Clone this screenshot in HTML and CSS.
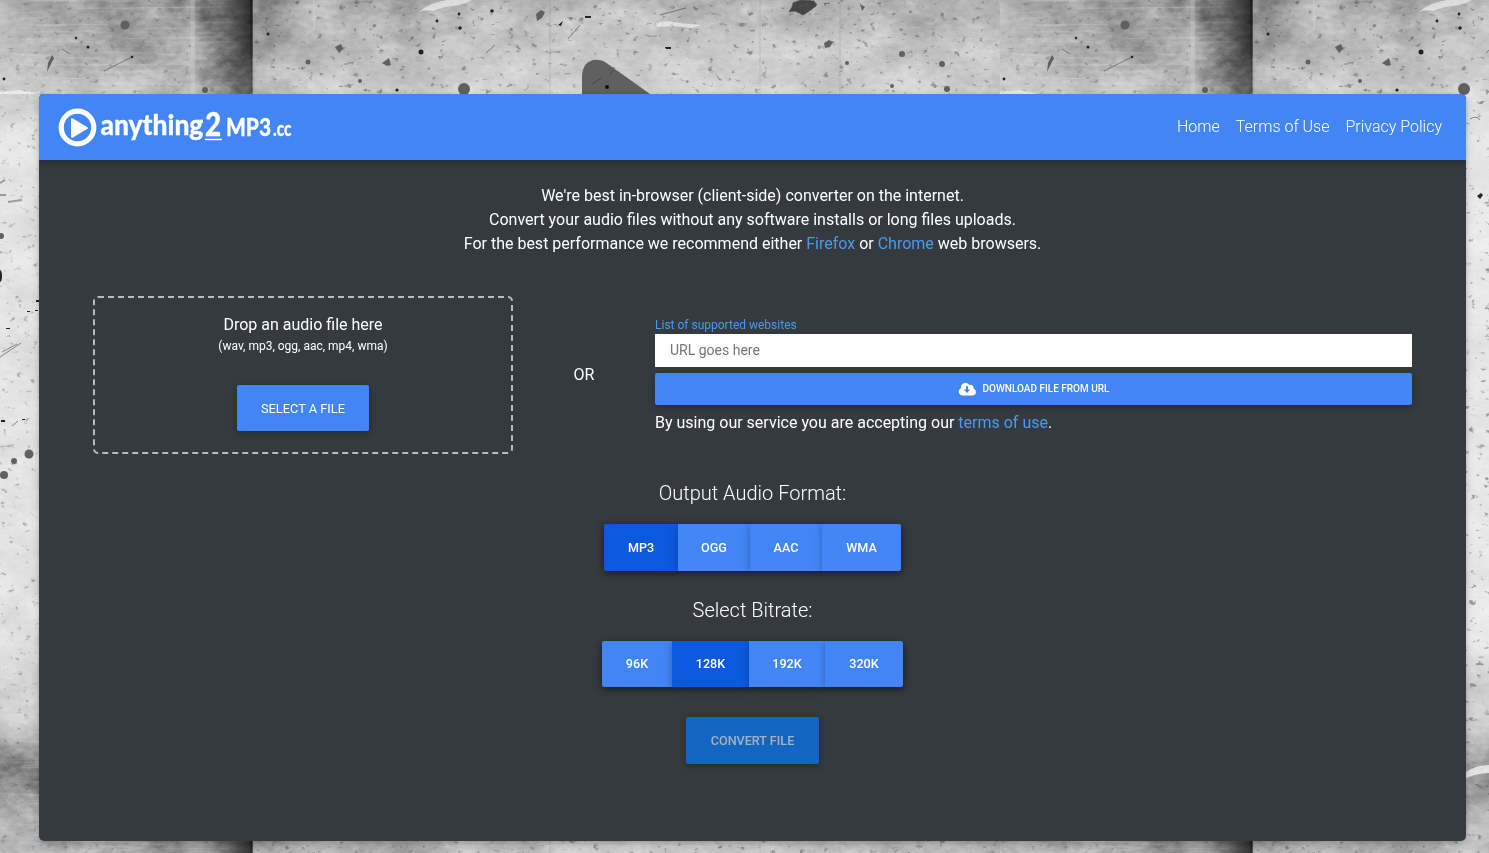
FILE: index.html
```html
<!DOCTYPE html>
<html lang="en">
<head>
<meta charset="utf-8">
<title>anything2MP3.cc</title>
<link rel="stylesheet" href="styles.css">
</head>
<body>
<svg class="wall" width="1489" height="853" viewBox="0 0 1489 853" aria-hidden="true">
  <defs>
    <linearGradient id="panel" x1="0" x2="1000" y1="0" y2="0" gradientUnits="userSpaceOnUse">
      <stop offset="0" stop-color="#bcbcbc"/><stop offset=".1" stop-color="#a8a8a8"/>
      <stop offset=".18" stop-color="#9c9c9c"/><stop offset=".19" stop-color="#acacac"/>
      <stop offset=".205" stop-color="#828282"/><stop offset=".228" stop-color="#585858"/>
      <stop offset=".25" stop-color="#2a2a2a"/><stop offset=".252" stop-color="#141414"/>
      <stop offset=".2535" stop-color="#a0a0a0"/><stop offset=".27" stop-color="#a4a4a4"/>
      <stop offset=".33" stop-color="#c0c0c0"/><stop offset=".4" stop-color="#acacac"/>
      <stop offset=".47" stop-color="#c4c4c4"/><stop offset=".75" stop-color="#c4c4c4"/><stop offset="1" stop-color="#bcbcbc"/>
    </linearGradient>
    <linearGradient id="light" x1="0" x2="0" y1="0" y2="1">
      <stop offset="0" stop-color="#000" stop-opacity=".08"/><stop offset=".05" stop-color="#fff" stop-opacity=".05"/>
      <stop offset=".1" stop-color="#fff" stop-opacity=".25"/><stop offset=".16" stop-color="#fff" stop-opacity=".62"/>
      <stop offset=".75" stop-color="#fff" stop-opacity=".6"/><stop offset=".84" stop-color="#fff" stop-opacity=".2"/>
      <stop offset=".9" stop-color="#000" stop-opacity=".3"/><stop offset=".95" stop-color="#000" stop-opacity=".12"/>
      <stop offset=".97" stop-color="#000" stop-opacity=".02"/>
      <stop offset="1" stop-color="#fff" stop-opacity=".05"/>
    </linearGradient>
    <linearGradient id="fade" x1="0" x2="1" y1="0" y2="0">
      <stop offset="0" stop-color="#000"/><stop offset=".15" stop-color="#fff"/><stop offset=".75" stop-color="#fff"/><stop offset="1" stop-color="#000"/>
    </linearGradient>
    <mask id="edges"><rect width="250" height="853" fill="url(#fade)"/></mask>
    <filter id="grain" x="0" y="0" width="100%" height="100%" color-interpolation-filters="sRGB">
      <feTurbulence type="fractalNoise" baseFrequency=".12 .2" numOctaves="4" seed="8"/>
      <feColorMatrix values=".6 .6 0 0 -.1  .6 .6 0 0 -.1  .6 .6 0 0 -.1  0 0 0 0 1"/>
    </filter>
    <filter id="cloud" x="0" y="0" width="100%" height="100%" color-interpolation-filters="sRGB">
      <feTurbulence type="fractalNoise" baseFrequency=".02 .03" numOctaves="3" seed="21"/>
      <feColorMatrix values="1 0 0 0 0  1 0 0 0 0  1 0 0 0 0  0 0 0 0 1"/>
    </filter>
    <filter id="streak" x="0" y="0" width="100%" height="100%" color-interpolation-filters="sRGB">
      <feTurbulence type="fractalNoise" baseFrequency=".012 .3" numOctaves="3" seed="5"/>
      <feColorMatrix values="0 0 0 0 1  0 0 0 0 1  0 0 0 0 1  3 0 0 0 -1.65"/>
    </filter>
    <filter id="pits" x="0" y="0" width="100%" height="100%" color-interpolation-filters="sRGB">
      <feTurbulence type="fractalNoise" baseFrequency=".13 .18" numOctaves="4" seed="14"/>
      <feColorMatrix values="0 0 0 0 .3  0 0 0 0 .3  0 0 0 0 .3  6 0 0 0 -4"/>
    </filter>
    <filter id="soft"><feGaussianBlur stdDeviation=".6"/></filter>
    <g id="tile">
      <rect width="1000" height="853" fill="url(#panel)"/>
      <rect width="1000" height="853" fill="url(#light)"/>
      <g class="blend">
        <rect width="1000" height="853" filter="url(#grain)" opacity=".45"/>
        <rect width="1000" height="853" filter="url(#cloud)" opacity=".45"/>
      </g>
      <g mask="url(#edges)">
        <rect width="250" height="100" filter="url(#streak)" opacity=".28"/>
        <rect y="720" width="250" height="133" filter="url(#streak)" opacity=".35"/>
      </g>
      <rect x="254" width="746" height="853" filter="url(#pits)" opacity=".5"/>
      <rect width="250" height="853" filter="url(#pits)" opacity=".35"/>
      <g filter="url(#soft)">
        <path d="M418 12q16-11 29-12h25q-8 5-20 6t-18 5q-7-2-16 1zM655 24q12-5 24-1l23 2-10 3q-18-3-35-1zM0 92l19-2 20 4H0z" fill="#fff" opacity=".55"/>
        <path d="M192 0v94M194 0v94M314 0v30" stroke="#ddd" opacity=".5"/>
        <g fill="#606060">
          <circle cx="125" cy="25" r="4.5"/><circle cx="464" cy="89" r="6"/>
          <path d="M382 63l7-5 2 7-4 1zM335 47l6-3 2 5-4 4zM48 63l4-8 2 3-7 14zM536 14l5-4 4 2-3 6-5 3z"/>
          <circle cx="308" cy="62" r="2.5"/><circle cx="205" cy="90" r="3"/><circle cx="360" cy="81" r="2"/>
          <circle cx="29" cy="454" r="4.5"/><circle cx="14" cy="461" r="3"/><circle cx="4" cy="475" r="4"/>
          <circle cx="1" cy="236" r="3"/><ellipse cx="0" cy="276" rx="2" ry="6" fill="#222"/>
          <path d="M824 43l5-3 4 2-3 5-5 1zM860 4l5 3-3 4z"/>
          <circle cx="902" cy="54" r="3"/><circle cx="942" cy="64" r="3"/><circle cx="847" cy="63" r="2"/><circle cx="892" cy="86" r="2"/><circle cx="947" cy="89" r="3"/>
        </g>
        <g fill="#222">
          <circle cx="421" cy="52" r="2.5"/><circle cx="460" cy="28" r="1.8"/><circle cx="459" cy="14" r="1.4"/><circle cx="492" cy="11" r="1.8"/>
          <circle cx="397" cy="90" r="1.6"/><circle cx="268" cy="34" r="1.5"/><circle cx="437" cy="21" r="1.4"/><circle cx="88" cy="47" r="1.5"/><circle cx="132" cy="57" r="1.3"/><circle cx="76" cy="38" r="1.2"/><circle cx="4" cy="79" r="1.4"/>
          <path d="M558 25l5-4-2 5zM585 16h6v2h-6zM665 47h6v2h-5zM605 86l3-2v4h-3z"/>
          <path d="M477 196l4-3 2 2-3 4z"/>
          <path d="M36 300h3v2h-3zM27 311h3v1h-3zM35 310h3v1h-3zM6 328h4v1H6zM1 420h4v2H1zM22 419h3v1h-3z"/>
        </g>
        <path d="M793 3l8-3 13 1 3 4-6 5-8 5-8-4-6 1 3-5zM824 4l5-1M798 7l12-4" fill="#222" stroke="#333" stroke-dasharray="3 1" opacity=".75"/>
        <path d="M104 71l28-14M62 49l8 5M568 39l12-14M660 15l26-7M0 357l21-14M2 352l15-8M12 426l6-5M486 53l9-8M470 119q7-4 10 1" fill="none" stroke="#555" opacity=".65"/>
        <path d="M0 183l5-3M0 195h6M8 202l14-2" stroke="#666" stroke-width="2" opacity=".6"/>
        <path d="M466 772q10-7 23-7v8q-10 0-23 5z" fill="#fff" opacity=".7"/>
      </g>
      <g class="seams"><path d="M254 0v853M550 0v853M760 0v853M840 0v853"/></g>
    </g>
  </defs>
  <use href="#tile"/>
  <use href="#tile" x="1000"/>
  <path d="M582 94V77C582 63 592 56 605 62L650 94Z" fill="#606060"/>
  <path d="M592 84l10-6M609 75l5-5" stroke="#484848"/><circle cx="607" cy="87" r="2" fill="#111"/>
</svg>

<main class="card">
  <header class="navbar">
    <a class="brand" aria-label="anything2MP3.cc">
      <svg width="240" height="46" viewBox="0 0 240 46">
        <circle cx="22.500" cy="23.500" r="16.300" fill="none" stroke="#fff" stroke-width="5.200"/>
        <path d="M17 15.200v17.600L32 24z" fill="#fff" stroke="#fff" stroke-width="2" stroke-linejoin="round"/>
        <g class="logo-text">
          <text transform="translate(45.500 31) scale(.85 1)" font-size="28.500" textLength="121" lengthAdjust="spacingAndGlyphs">anything</text>
          <text transform="translate(150 31.500) scale(.9 1)" font-size="32" textLength="18" lengthAdjust="spacingAndGlyphs">2</text>
          <text transform="translate(171 32) scale(.9 1)" font-size="25" textLength="50" lengthAdjust="spacingAndGlyphs">MP3</text>
          <text transform="translate(218 32) scale(.8 1)" font-size="20" textLength="23" lengthAdjust="spacingAndGlyphs">.cc</text>
        </g>
        <path d="M150 35.500h17" stroke="#fff" stroke-width="1.500"/>
      </svg>
    </a>
    <nav class="menu"><a>Home</a><a>Terms of Use</a><a>Privacy Policy</a></nav>
  </header>
  <p class="intro">We're best in-browser (client-side) converter on the internet.<br>Convert your audio files without any software installs or long files uploads.<br>For the best performance we recommend either <a>Firefox</a> or <a>Chrome</a> web browsers.</p>
  <section class="sources">
    <div class="drop">
      <span>Drop an audio file here</span>
      <small>(wav, mp3, ogg, aac, mp4, wma)</small>
      <button class="btn select">Select a file</button>
    </div>
    <div class="or">OR</div>
    <div class="remote">
      <a class="supported">List of supported websites</a>
      <input class="url" type="text" placeholder="URL goes here">
      <button class="btn download">
        <svg width="18" height="14" viewBox="0 0 18 14"><path d="M4.500 13.500A4 4 0 0 1 3 5.900 4.500 4.500 0 0 1 11.300 3a3 3 0 0 1 4.200 3.500 3.600 3.600 0 0 1-1 7z" fill="#fff"/><path d="M8 4.300h2v3.200h2.200L9 10.900 5.800 7.500H8z" fill="#4285f4"/></svg>
        Download file from URL
      </button>
      <p class="terms">By using our service you are accepting our <a>terms of use</a>.</p>
    </div>
  </section>
  <h2 class="title">Output Audio Format:</h2>
  <div class="group formats"><button class="btn active">MP3</button><button class="btn">OGG</button><button class="btn">AAC</button><button class="btn">WMA</button></div>
  <h2 class="title">Select Bitrate:</h2>
  <div class="group bitrates"><button class="btn">96k</button><button class="btn active">128k</button><button class="btn">192k</button><button class="btn">320k</button></div>
  <button class="btn convert">Convert file</button>
</main>
</body>
</html>
```
FILE: styles.css
```css
* { box-sizing: border-box; }
body { margin: 0; height: 853px; overflow: hidden; padding: 94px 23px 0 39px; background: #ccc; color: #fff; font: 400 16px/24px Roboto, sans-serif; }
.wall { position: absolute; inset: 0; z-index: -1; }
.blend { mix-blend-mode: overlay; }
.seams { stroke: #777; stroke-width: 1; opacity: .2; }
.card { height: 747px; display: flex; flex-direction: column; align-items: center; background: #343a40; border-radius: 5px; overflow: hidden; box-shadow: 0 2px 5px rgba(0,0,0,.16), 0 2px 10px rgba(0,0,0,.12); }
.navbar { width: 100%; height: 66px; flex: none; display: flex; justify-content: space-between; align-items: center; padding: 0 24px 0 16px; background: #4285f4; box-shadow: 0 2px 5px rgba(0,0,0,.16), 0 2px 10px rgba(0,0,0,.12); }
.brand, .brand svg { display: block; }
.logo-text { font-family: Lato, sans-serif; font-weight: 900; fill: #fff; stroke: #fff; stroke-width: .3; }
.menu { display: flex; gap: 16px; font-weight: 300; }
a { color: #4a9bf0; text-decoration: none; }
.menu a { color: #fff; }
.intro { margin: 24px 0 0; text-align: center; }
.sources { width: 100%; height: 158px; margin-top: 40px; padding: 0 54px; display: flex; }
.drop { width: 420px; border: 2px dashed #bbb; border-radius: 5px; display: flex; flex-direction: column; align-items: center; padding-top: 15px; }
.drop small { font-size: 12px; line-height: 18px; }
.btn { border: 0; margin: 0; padding: 0; height: 46px; color: #fff; background: #4285f4; font: 500 12.6px/19px Roboto, sans-serif; text-transform: uppercase; border-radius: 2px; box-shadow: 0 2px 5px rgba(0,0,0,.16), 0 2px 10px rgba(0,0,0,.12); }
.select { width: 132px; margin-top: 30px; font-weight: 400; font-size: 12.8px; }
.or { width: 142px; text-align: center; line-height: 157px; }
.remote { flex: 1; display: flex; flex-direction: column; padding-top: 20px; }
.supported { font-size: 12px; line-height: 18px; }
.url { height: 33px; border: 0; padding: 0 15px 2px; background: #fff; font: 400 14px Roboto, sans-serif; border-radius: 0; }
.url::placeholder { color: #757575; }
.download { height: 32px; margin-top: 6px; padding-bottom: 1px; font-size: 10px; display: flex; align-items: center; justify-content: center; gap: 7px; }
.terms { margin: 6px 0 0; }
.title { margin: 27px 0 19px; font-size: 20px; line-height: 24px; font-weight: 300; }
.group { display: flex; border-radius: 2px; box-shadow: 0 2px 5px rgba(0,0,0,.16), 0 2px 10px rgba(0,0,0,.12); }
.group .btn { border-radius: 0; }
.group .btn:first-child { border-radius: 2px 0 0 2px; }
.group .btn:last-child { border-radius: 0 2px 2px 0; }
.group .active { background: #0b5add; }
.formats { display: grid; grid-template-columns: 74px 72px 72px 79px; }
.formats .btn { height: 47px; }
.bitrates { display: grid; grid-template-columns: 70px 77px 76px 78px; }
.bitrates .btn { padding-bottom: 1px; }
.convert { width: 133px; height: 47px; margin-top: 30px; background: #1266c1; color: #a8b2bc; }
```
